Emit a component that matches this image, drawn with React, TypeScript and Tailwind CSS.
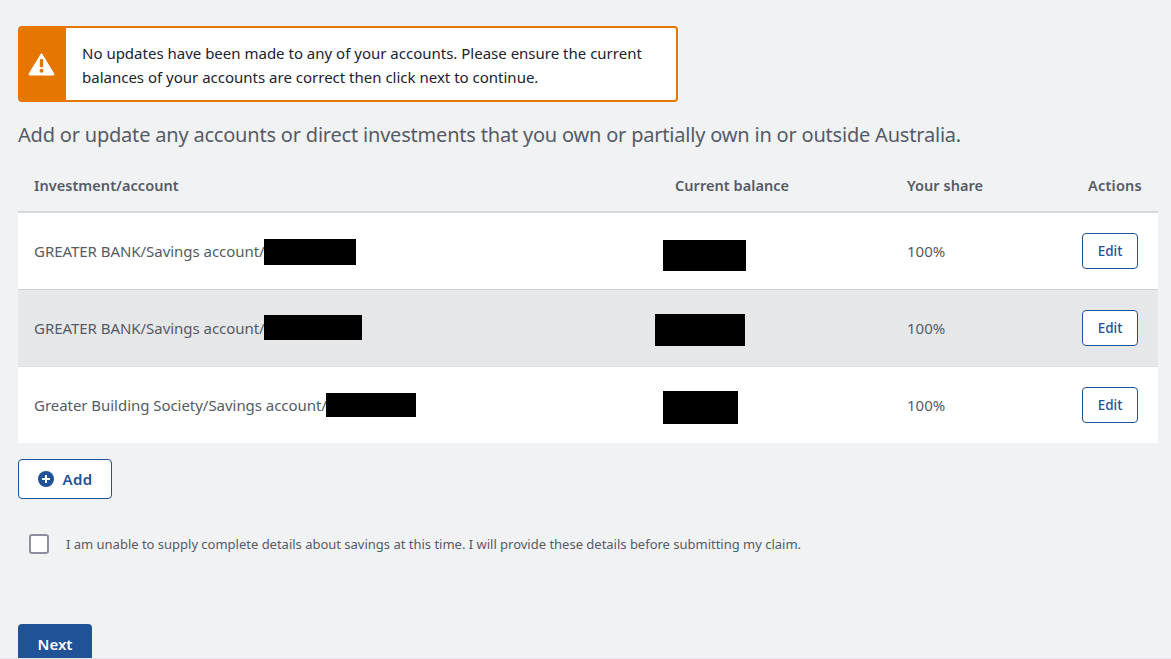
const font = "font-['Noto_Sans','Open_Sans',sans-serif]";

function Row({ name, box, balance, row }: { name: string; box: string; balance: string; row: string }) {
  return (
    <div className={`flex items-center ${row}`}>
      <div className="w-[657px] pl-4 flex items-center text-[15px] leading-5 text-[#555b66] tracking-[-0.04px]">
        <span>{name}</span>
        <span className={`bg-black -ml-px ${box}`} />
      </div>
      <div className="w-[232px] -ml-5 mr-5 flex items-center">
        <span className={`bg-black ${balance}`} />
      </div>
      <div className="flex-1 text-[15px] leading-5 text-[#555b66]">100%</div>
      <button className="w-14 h-9 mr-5 bg-white border border-[#1f5296] rounded-[4px] text-[13.5px] font-medium text-[#1f5296]">Edit</button>
    </div>
  );
}

export default function App() {
  return (
    <div className={`${font} h-[659px] overflow-hidden bg-[#f1f2f4] border-b border-[#e4e4ea] px-[18px] pt-[26px]`}>
      <div className="flex w-[660px] h-[76px] border-2 border-[#e57700] rounded-[4px] bg-white overflow-hidden">
        <div className="w-[46px] pr-[3px] bg-[#e57700] flex items-center justify-center">
          <svg width="27" height="24" viewBox="0 0 27 24">
            <path d="M13.5 1.5 L26 22 Q26.3 23 25 23 H2 Q.7 23 1 22 Z" fill="#fff" stroke="#fff" strokeLinejoin="round" />
            <rect x="11.8" y="7" width="3.4" height="8.5" rx="1.4" fill="#e57700" />
            <circle cx="13.5" cy="18.8" r="2" fill="#e57700" />
          </svg>
        </div>
        <div className="pl-4 pt-[13px] text-[15px] leading-6 text-[#1b2130]">
          No updates have been made to any of your accounts. Please ensure the current<br />
          balances of your accounts are correct then click next to continue.
        </div>
      </div>

      <p className="mt-[19px] text-[20px] leading-7 text-[#555b66] tracking-[-0.2px]">
        Add or update any accounts or direct investments that you own or partially own in or outside Australia.
      </p>

      <div className="mt-[14px] w-[1140px]">
        <div className="flex items-center h-[50px] pb-[2px] border-b-2 border-[#d8d9db] text-[14.5px] font-semibold text-[#555b66] tracking-[0.05px]">
          <div className="w-[657px] pl-4">Investment/account</div>
          <div className="w-[232px]">Current balance</div>
          <div className="flex-1">Your share</div>
          <div className="pr-4 tracking-[0.25px]">Actions</div>
        </div>
        <Row name="GREATER BANK/Savings account/" box="w-[92px] h-[26px] mt-[2px]" balance="w-[83px] h-[31px] ml-[8px] mt-[9px]" row="h-[77px] bg-white border-b border-[#d0d1d4]" />
        <Row name="GREATER BANK/Savings account/" box="w-[98px] h-[25px] mb-px" balance="w-[90px] h-[32px] mt-[4px]" row="h-[77px] bg-[#e6e7e9] border-b border-[#dfe0e2]" />
        <Row name="Greater Building Society/Savings account/" box="w-[90px] h-[24px]" balance="w-[75px] h-[33px] ml-[8px] mt-[5px]" row="h-[76px] bg-white" />
      </div>

      <button className="mt-4 w-[94px] h-10 flex items-center justify-center gap-[9px] bg-white border border-[#1f5296] rounded-[4px] text-[15px] tracking-[0.3px] font-semibold text-[#1f5296]">
        <svg width="16" height="16" viewBox="0 0 16 16">
          <circle cx="8" cy="8" r="8" fill="#1f5296" />
          <path d="M8 4v8M4 8h8" stroke="#fff" strokeWidth="2" />
        </svg>
        Add
      </button>

      <label className="mt-[35px] ml-[11px] flex items-center gap-[17px]">
        <span className="w-5 h-5 bg-white border-2 border-[#8d8f9e] rounded-[3px]" />
        <span className="text-[13px] leading-5 text-[#555b66] tracking-[-0.01px]">
          I am unable to supply complete details about savings at this time. I will provide these details before submitting my claim.
        </span>
      </label>

      <button className="mt-[70px] block w-[74px] h-10 bg-[#1f5296] rounded-[4px] text-[15px] font-semibold text-white">Next</button>
    </div>
  );
}
